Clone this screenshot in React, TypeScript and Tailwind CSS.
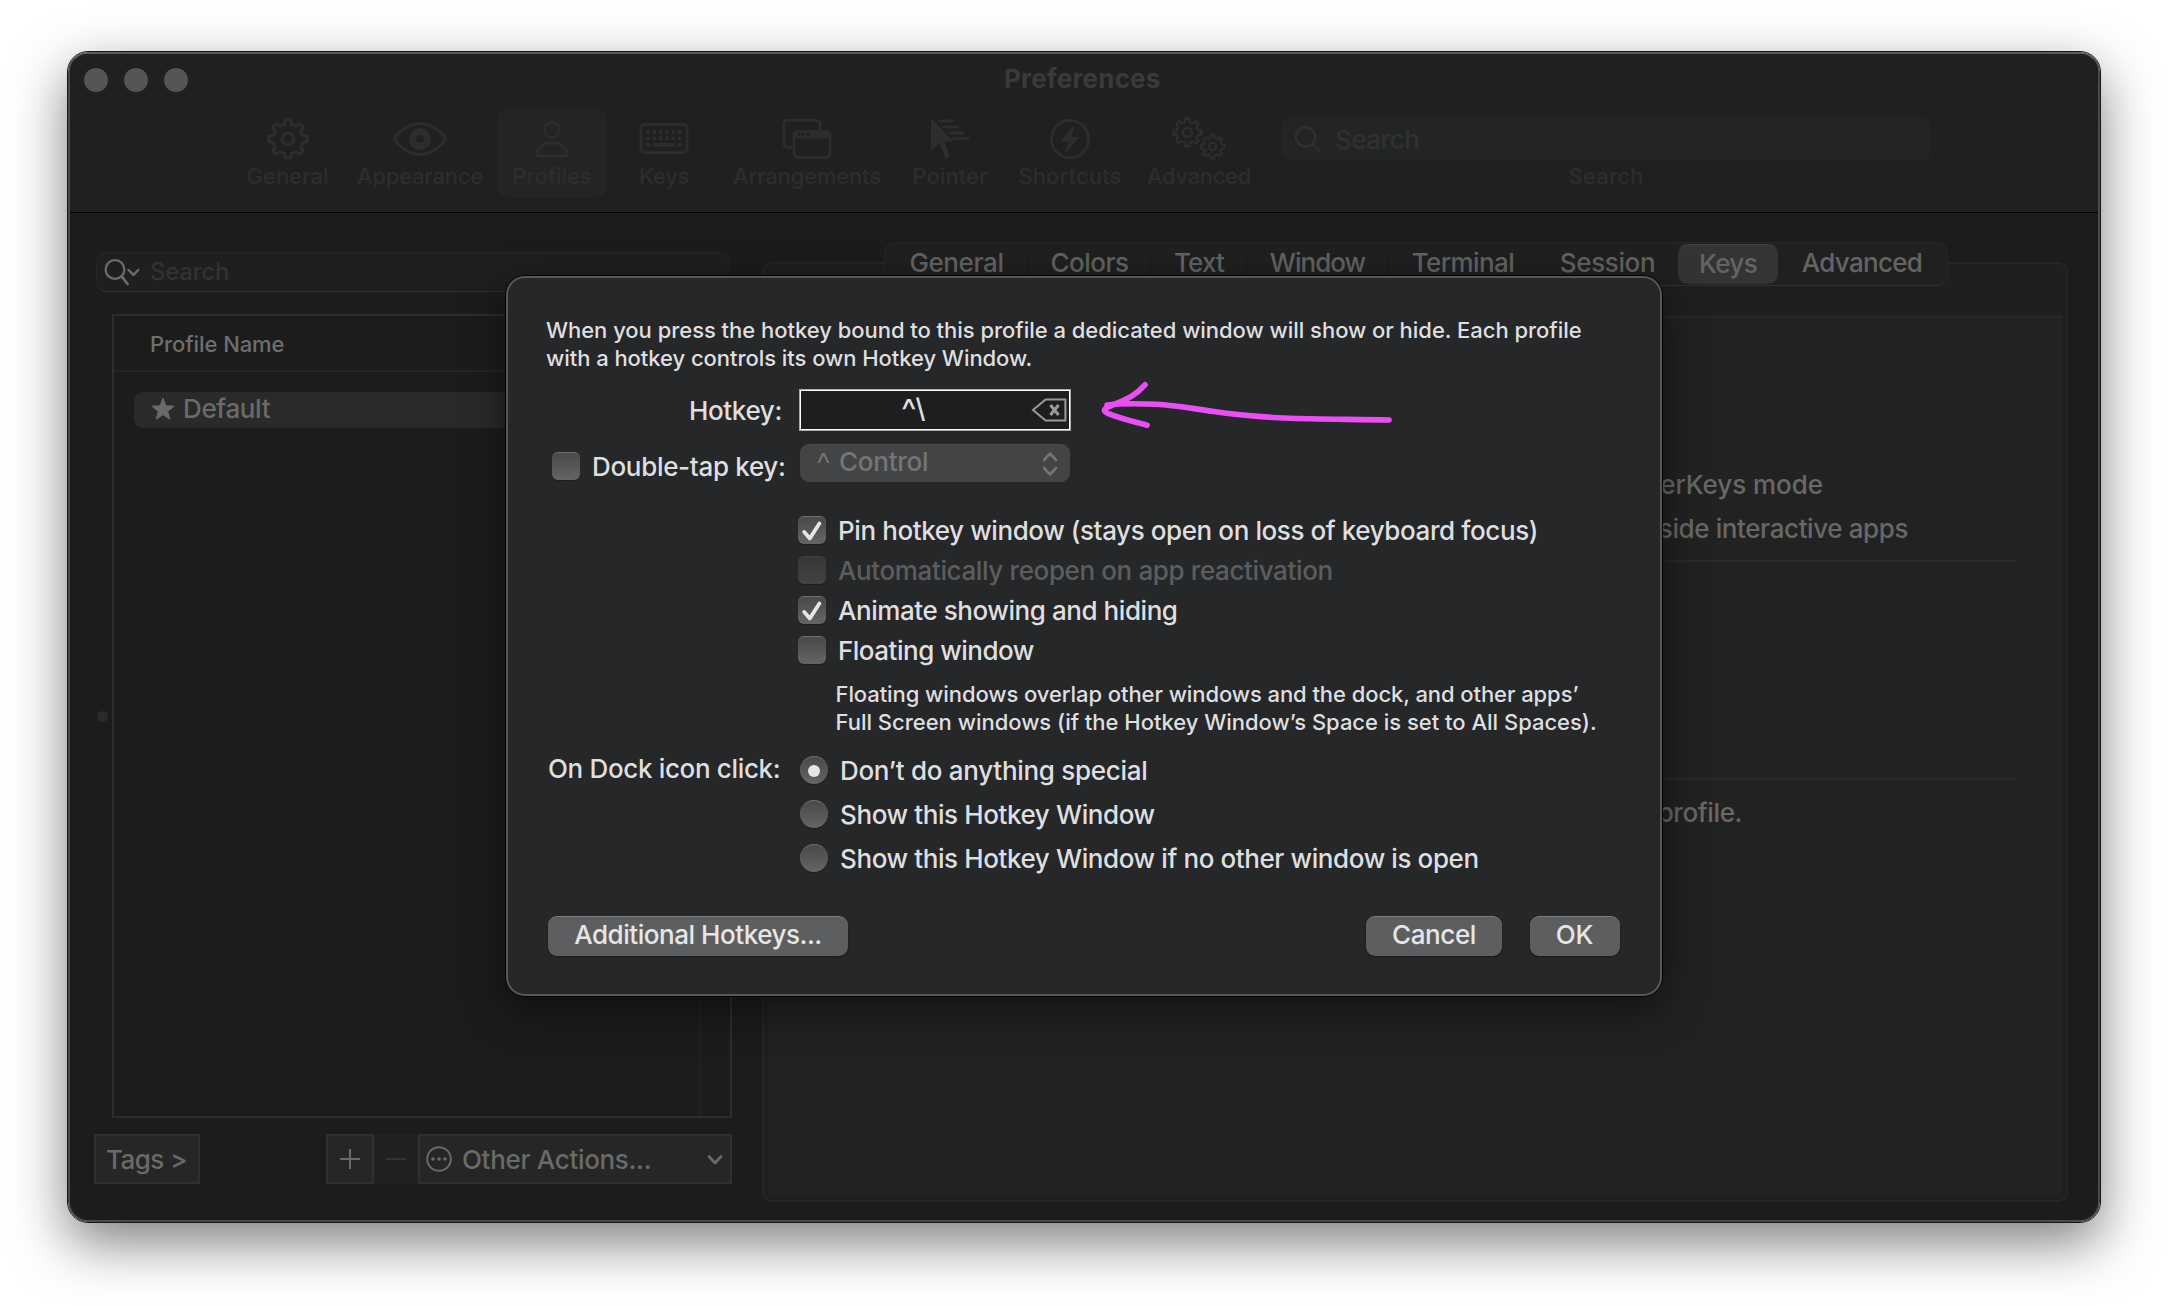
import React from "react";

/** Outline of an eight-toothed gear centred on (cx, cy). */
function gearPath(cx: number, cy: number, outer: number, inner: number) {
  const pts: string[] = [];
  for (let k = 0; k < 8; k++) {
    const steps: [number, number][] = [
      [inner, -13],
      [outer, -8],
      [outer, 8],
      [inner, 13],
    ];
    for (const [r, d] of steps) {
      const a = ((k * 45 - 90 + d) * Math.PI) / 180;
      pts.push(`${(cx + r * Math.cos(a)).toFixed(2)} ${(cy + r * Math.sin(a)).toFixed(2)}`);
    }
  }
  return `M${pts.join("L")}Z`;
}

const GearIcon = () => (
  <svg width="42" height="42" fill="none" stroke="currentColor" strokeWidth="3" strokeLinejoin="round">
    <path d={gearPath(21, 21, 19.3, 15)} />
    <circle cx="21" cy="21" r="5.9" />
  </svg>
);

const EyeIcon = () => (
  <svg width="54" height="42" fill="none" stroke="currentColor" strokeWidth="3" strokeLinejoin="round">
    <path d="M2 21C2 18 13 5.6 27 5.6S52 18 52 21S41 36.4 27 36.4S2 24 2 21Z" />
    <circle cx="27" cy="21" r="7.4" strokeWidth="7" />
  </svg>
);

const PersonIcon = () => (
  <svg width="36" height="42" fill="none" stroke="currentColor" strokeWidth="2.6" strokeLinejoin="round">
    <ellipse cx="18" cy="12" rx="7" ry="7.8" />
    <path d="M4.2 37.7H31.8Q34.4 37.7 33.7 34.6C32 29 26 24.6 18 24.6S4 29 2.3 34.6Q1.6 37.7 4.2 37.7Z" />
  </svg>
);

const KeyboardIcon = () => (
  <svg width="50" height="42" fill="none" stroke="currentColor">
    <rect x="1.9" y="6.4" width="46.2" height="28.2" rx="4" strokeWidth="2.8" />
    <path d="M7.4 14H42.4M7.4 20.3H42.4" strokeWidth="3.6" strokeDasharray="3.4 2.92" />
    <path d="M7.4 26.7H10.8M39 26.7H42.4" strokeWidth="3.6" />
    <path d="M15.4 26.7H34.4" strokeWidth="3.6" strokeLinecap="round" />
  </svg>
);

const WindowsIcon = () => (
  <svg width="50" height="42" fill="none" stroke="currentColor" strokeWidth="2.8">
    <path d="M11 29.4H6Q2 29.4 2 25.4V6.4Q2 2.4 6 2.4H34Q38 2.4 38 6.4V12" />
    <rect x="12" y="13.4" width="36" height="26" rx="4" />
    <path
      fill="currentColor"
      stroke="none"
      fillRule="evenodd"
      d="M12 20V16Q12 12.4 16 12.4H44Q48 12.4 48 16V20.6H12ZM15.4 15h3v3h-3ZM20 15h3v3h-3ZM24.6 15h3v3h-3Z"
    />
  </svg>
);

const PointerIcon = () => (
  <svg width="40" height="42" fill="currentColor">
    <path d="M1 1Q1 0 2 1L22.6 22.4Q23.2 23.6 22 23.6H14.6L19.6 38Q19.8 39 19 39.4L16.6 40.4Q15.4 40.8 15 39.8L9.6 25.4L2 31.6Q1 32.2 1 31Z" />
    <path d="M9 3H22M14 9H28M19.5 15H33M24 20.6H38.5" stroke="currentColor" strokeWidth="2.8" strokeLinecap="round" />
  </svg>
);

const BoltIcon = () => (
  <svg width="42" height="42" fill="none" stroke="currentColor" strokeWidth="2.8">
    <circle cx="21" cy="21" r="18.6" />
    <path fill="currentColor" stroke="none" d="M24.6 8L12.6 22Q12 23.2 13.4 23.2H19.6L16.4 33.4Q16.4 35 17.8 34L29.6 20Q30 18.8 28.8 18.8H22.4L25.6 9Q25.6 7.4 24.6 8Z" />
  </svg>
);

const GearsIcon = () => (
  <svg width="54" height="44" fill="none" stroke="currentColor" strokeWidth="2.6" strokeLinejoin="round">
    <path d={gearPath(15.4, 15.4, 14, 10.8)} />
    <circle cx="15.4" cy="15.4" r="4.6" />
    <g strokeWidth="2.2">
      <path d={gearPath(40.6, 29.6, 11.8, 9.2)} />
      <circle cx="40.6" cy="29.6" r="3.6" />
    </g>
  </svg>
);

const toolbar = [
  { label: "General", icon: <GearIcon />, cell: "w-[111px]", track: "tracking-[-0.02px]" },
  { label: "Appearance", icon: <EyeIcon />, cell: "w-[154px]", track: "tracking-[-0.22px]" },
  { label: "Profiles", icon: <PersonIcon />, cell: "w-[110px] bg-[#232525]", track: "tracking-[-0.06px]" },
  { label: "Keys", icon: <KeyboardIcon />, cell: "w-[114px]", track: "tracking-[-0.3px]" },
  { label: "Arrangements", icon: <WindowsIcon />, cell: "w-[172px]", track: "tracking-[-0.18px]" },
  { label: "Pointer", icon: <PointerIcon />, cell: "w-[114px]", track: "tracking-[0.04px]" },
  { label: "Shortcuts", icon: <BoltIcon />, cell: "w-[126px]", track: "tracking-[0.14px]" },
  { label: "Advanced", icon: <GearsIcon />, cell: "w-[132px]", track: "tracking-[-0.34px]" },
];

const tabs = [
  { label: "General", cell: "w-[143px]", track: "tracking-[-0.4px]" },
  { label: "Colors", cell: "w-[123px]", track: "tracking-[-0.5px]" },
  { label: "Text", cell: "w-[96px]", track: "tracking-[-0.9px]" },
  { label: "Window", cell: "w-[141px]", track: "tracking-[-0.95px]" },
  { label: "Terminal", cell: "w-[149px] pl-px", track: "tracking-[-0.58px]" },
  { label: "Session", cell: "w-[141px]", track: "tracking-[-0.38px]" },
  { label: "Keys", cell: "w-[100px]", track: "tracking-[-0.65px]" },
  { label: "Advanced", cell: "w-[168px]", track: "tracking-[-0.7px]" },
];

function Header() {
  return (
    <header className="h-[159px] border-b border-black bg-[#202020]">
      <div className="flex h-[52px] items-center pl-[14px]">
        <div className="flex gap-4">
          <span className="size-6 rounded-full bg-[#555555]" />
          <span className="size-6 rounded-full bg-[#555555]" />
          <span className="size-6 rounded-full bg-[#555555]" />
        </div>
        <h1 className="ml-[816px] pb-[2px] text-[26px] leading-8 font-bold tracking-[0.18px] text-[#3a3a3a]">Preferences</h1>
      </div>
      <nav className="flex pt-[2px] pl-[162px] text-[#2d2d2d]">
        {toolbar.map((t) => (
          <div key={t.label} className={`flex h-[90px] flex-none flex-col items-center rounded-[12px] pt-[10px] ${t.cell}`}>
            <div className="flex h-[42px] items-center">{t.icon}</div>
            <span className={`mt-[2px] text-[22px] leading-7 ${t.track}`}>{t.label}</span>
          </div>
        ))}
        <div className="ml-4 flex w-[650px] flex-col items-center pt-[9px]">
          <div className="flex h-11 w-full items-center rounded-[10px] bg-[#232525] pl-[13px] text-[#303131]">
            <svg width="28" height="28" fill="none" stroke="currentColor" strokeWidth="2.2" strokeLinecap="round">
              <circle cx="11.5" cy="12" r="9.6" />
              <path d="M18.4 19L25.4 25.6" />
            </svg>
            <span className="ml-[13px] pt-[2px] text-[26px] leading-8 tracking-[-0.5px]">Search</span>
          </div>
          <span className="mt-px text-[22px] leading-7 tracking-[0.18px]">Search</span>
        </div>
      </nav>
    </header>
  );
}

function ProfileList() {
  return (
    <aside className="ml-6 w-[638px] flex-none pt-[39px]">
      <div className="ml-[2px] flex h-10 w-[634px] items-center rounded-[11px] border border-[#262626] border-b-[#303030] bg-[#1f1f1f] pl-[7px]">
        <svg width="36" height="28" fill="none" stroke="#6c6c6c" strokeWidth="2.2" strokeLinecap="round" strokeLinejoin="round">
          <circle cx="11" cy="11.5" r="9.4" />
          <path d="M17.8 18.5L23.6 26" strokeWidth="2.8" />
          <path d="M24.4 11.9L29.4 16.9L34.4 11.9" />
        </svg>
        <span className="ml-[10px] text-[24px] leading-8 tracking-[-0.25px] text-[#323232]">Search</span>
      </div>
      <div className="mt-[22px] ml-[18px] flex h-[804px] w-[620px] border-2 border-[#2e2e2e]">
        <div className="flex-1">
          <div className="flex h-14 items-center border-b-2 border-[#252525] pt-[2px] pl-9 text-[22px] tracking-[-0.08px] text-[#6e6e6e]">
            Profile Name
          </div>
          <div className="mt-5 mr-3 ml-5 flex h-9 items-center rounded-[9px] bg-[#2a2a2a] pl-[17px] text-[#6a6a6a]">
            <svg width="24" height="24" fill="currentColor" stroke="currentColor" strokeWidth="1" strokeLinejoin="round">
              <path d="M12 0.2L14.9 7.8L23 8.2L16.7 13.3L18.8 21.2L12 16.7L5.2 21.2L7.3 13.3L1 8.2L9.1 7.8Z" />
            </svg>
            <span className="ml-2 pb-[2px] text-[26px] leading-8 tracking-[-0.35px]">Default</span>
          </div>
        </div>
        <div className="w-[30px] border-l border-[#252525]" />
      </div>
      <div className="mt-4 flex h-[50px] text-[26px] text-[#6a6a6a]">
        <button className="w-[106px] border-2 border-[#303030] bg-[#262627] pt-px pr-px tracking-[-0.5px]">Tags &gt;</button>
        <button className="ml-[126px] flex w-12 items-center justify-center border-2 border-[#303030] bg-[#262627]">
          <svg width="22" height="22" stroke="currentColor" strokeWidth="2">
            <path d="M1 11H21M11 1V21" />
          </svg>
        </button>
        <button className="flex w-11 items-center justify-center bg-[#202121] text-[#343434]">
          <svg width="22" height="22" stroke="currentColor" strokeWidth="2">
            <path d="M1 11H21" />
          </svg>
        </button>
        <button className="flex flex-1 items-center border-2 border-[#303030] bg-[#262627] pl-[6px]">
          <svg width="26" height="26" fill="none" stroke="currentColor" strokeWidth="2">
            <circle cx="13" cy="13" r="11.8" />
            <g fill="currentColor" stroke="none">
              <circle cx="7" cy="13" r="1.8" />
              <circle cx="13" cy="13" r="1.8" />
              <circle cx="19" cy="13" r="1.8" />
            </g>
          </svg>
          <span className="ml-[10px] pt-px tracking-[-0.32px]">Other Actions...</span>
          <svg className="ml-auto mr-[6px]" width="18" height="14" fill="none" stroke="currentColor" strokeWidth="2.8" strokeLinecap="round" strokeLinejoin="round">
            <path d="M3 4.5L9 11L15 4.5" />
          </svg>
        </button>
      </div>
    </aside>
  );
}

function ProfileDetail() {
  return (
    <section className="ml-[30px] w-[1306px] flex-none pt-[29px]">
      <div className="relative z-10 ml-[122px] flex h-11 w-[1064px] rounded-[12px] border border-[#272727] border-b-[#313131] bg-[#202020] text-[26px] text-[#646464]">
        {tabs.map((t, i) => (
          <div
            key={t.label}
            className={
              t.label === "Keys"
                ? `-my-px mt-px flex h-10 flex-none items-center justify-center rounded-[10px] border-t border-[#404040] bg-[#343434] pb-[3px] ${t.cell} ${t.track}`
                : `relative flex flex-none items-center justify-center pb-[3px] ${t.cell} ${t.track}`
            }
          >
            {t.label}
            {i < 5 && <span className="absolute right-0 h-6 w-[2px] bg-[#1d1d1d]" />}
          </div>
        ))}
      </div>
      <div className="-mt-6 h-[940px] rounded-[10px] border-2 border-[#252525] bg-[#1f1f1f] px-1 pt-[52px] pb-1">
        <div className="h-full border-t-2 border-[#282828] bg-[#222222] pt-[145px] text-[26px] leading-[44px] tracking-[-0.4px] text-[#686868]">
          <p className="w-[1055px] text-right tracking-[-0.05px]">herKeys mode</p>
          <p className="w-[1140px] text-right">side interactive apps</p>
          <hr className="mt-[9px] ml-8 w-[1216px] border-t-2 border-[#2a2a2a]" />
          <hr className="mt-[216px] ml-8 w-[1214px] border-t-2 border-[#2a2a2a]" />
          <p className="mt-[11px] w-[974px] text-right">profile.</p>
        </div>
      </div>
    </section>
  );
}

function Checkbox({ checked, disabled }: { checked?: boolean; disabled?: boolean }) {
  return (
    <span
      className={`flex size-7 flex-none items-center justify-center rounded-[6px] border-t shadow-[0_1px_1px_rgba(0,0,0,0.3)] ${
        disabled
          ? "border-[#3e3f41] bg-linear-to-b from-[#37383a] to-[#414244]"
          : "border-[#707173] bg-linear-to-b from-[#48494b] to-[#646567]"
      }`}
    >
      {checked && (
        <svg width="22" height="22" fill="none" stroke="#e6e6e6" strokeWidth="3.8" strokeLinecap="round" strokeLinejoin="round">
          <path d="M3.2 12L8.8 18.4L18.4 3.4" />
        </svg>
      )}
    </span>
  );
}

function Radio({ checked }: { checked?: boolean }) {
  return (
    <span className="flex size-7 flex-none items-center justify-center rounded-full border-t border-[#707173] bg-linear-to-b from-[#48494b] to-[#646567] shadow-[0_1px_1px_rgba(0,0,0,0.3)]">
      {checked && <span className="size-3 rounded-full bg-[#e6e6e6]" />}
    </span>
  );
}

const pushButton =
  "flex h-10 items-center justify-center rounded-[9px] border-t border-[#7b7c7e] bg-[#5d5e60] pb-[5px] text-[26px] shadow-[0_1px_2px_rgba(0,0,0,0.4)]";

function HotkeyDialog() {
  return (
    <div className="absolute top-[275px] left-[505px] z-20 h-[722px] w-[1158px] rounded-[20px] border border-black bg-[#56575a] p-[2px] text-[#dfdfe0] shadow-[0_12px_44px_rgba(0,0,0,0.5)]">
      <div className="flex h-full flex-col rounded-[17px] bg-[#262729] pt-[38px] pl-px">
        <p className="pl-[37px] text-[22px] leading-7 tracking-[-0.033px] whitespace-nowrap">
          When you press the hotkey bound to this profile a dedicated window will show or hide. Each profile
          <br />
          <span className="tracking-[-0.05px]">with a hotkey controls its own Hotkey Window.</span>
        </p>

        <div className="mt-[17px] flex h-[42px] items-center text-[26px]">
          <span className="w-[290px] pr-[17px] text-right tracking-[-0.35px]">Hotkey:</span>
          <div className="h-[42px] w-[272px] border border-[#a9a9a9]">
            <div className="flex h-full items-center border border-white bg-[#1e1e1e]">
              <span className="ml-[100px] h-8 text-[27px] leading-7">
                <span className="align-[-4px] text-[33px] leading-none font-normal tracking-[-1px]">^</span>\
              </span>
              <svg className="ml-auto mr-[2px]" width="36" height="24" fill="none" stroke="#9a9a9a" strokeWidth="2">
                <path d="M34.4 1.6H14.6L2 12L14.6 22.4H34.4Z" />
                <path d="M19.4 7L27.6 17M27.6 7L19.4 17" strokeWidth="3" />
              </svg>
            </div>
          </div>
        </div>

        <div className="mt-[13px] flex h-[38px] text-[26px]">
          <div className="flex h-7 w-[291px] items-center pt-4 pl-[43px]">
            <Checkbox />
            <span className="ml-3 tracking-[-0.32px]">Double-tap key:</span>
          </div>
          <div className="flex h-[38px] w-[270px] items-center rounded-[9px] border-t border-[#4c4d4f] bg-[#434446] pl-4 text-[#747577]">
            <span className="w-[23px] text-[33px] leading-8 font-light">^</span>
            <span className="pb-[4px] tracking-[-0.25px]">Control</span>
            <svg className="ml-auto mr-3" width="16" height="26" fill="none" stroke="currentColor" strokeWidth="2.8" strokeLinecap="round" strokeLinejoin="round">
              <path d="M2 9L8 2.6L14 9M2 17L8 23.4L14 17" />
            </svg>
          </div>
        </div>

        <div className="mt-7 ml-[289px] text-[26px] tracking-[-0.41px]">
          <label className="flex h-10 items-center gap-3">
            <Checkbox checked />
            Pin hotkey window (stays open on loss of keyboard focus)
          </label>
          <label className="flex h-10 items-center gap-3 tracking-[-0.38px] text-[#5c5d5f]">
            <Checkbox disabled />
            Automatically reopen on app reactivation
          </label>
          <label className="flex h-10 items-center gap-3 tracking-[-0.44px]">
            <Checkbox checked />
            Animate showing and hiding
          </label>
          <label className="flex h-10 items-center gap-3 tracking-[-0.5px]">
            <Checkbox />
            Floating window
          </label>
        </div>

        <p className="mt-[10px] pl-[326.5px] text-[22px] leading-7 tracking-[-0.075px] whitespace-nowrap">
          Floating windows overlap other windows and the dock, and other apps’
          <br />
          <span className="tracking-[-0.015px]">Full Screen windows (if the Hotkey Window’s Space is set to All Spaces).</span>
        </p>

        <div className="mt-3 flex text-[26px]">
          <span className="h-10 w-[291px] pl-[39px] leading-[42px] tracking-[-0.34px]">On Dock icon click:</span>
          <div className="tracking-[-0.4px]">
            <label className="flex h-11 items-center gap-3 tracking-[-0.3px]">
              <Radio checked />
              Don’t do anything special
            </label>
            <label className="flex h-11 items-center gap-3">
              <Radio />
              Show this Hotkey Window
            </label>
            <label className="flex h-11 items-center gap-3">
              <Radio />
              Show this Hotkey Window if no other window is open
            </label>
          </div>
        </div>

        <div className="mt-9 flex pr-[40px] pl-[39px] text-[#e6e6e6]">
          <button className={`w-[300px] tracking-[-0.46px] ${pushButton}`}>Additional Hotkeys...</button>
          <button className={`ml-auto w-[136px] tracking-[-0.4px] ${pushButton}`}>Cancel</button>
          <button className={`ml-7 w-[90px] pr-px tracking-[-0.1px] ${pushButton}`}>OK</button>
        </div>
      </div>

      {/* Hand-drawn arrow pointing at the hotkey field */}
      <svg
        className="absolute top-[100px] left-[584px]"
        width="310"
        height="60"
        fill="none"
        stroke="#e94ff5"
        strokeWidth="5.6"
        strokeLinecap="round"
        strokeLinejoin="round"
      >
        <path d="M299 44C262 43.1 230 43.5 194 42C164 40.6 146 39.2 124 35.6C100 32.2 84 29 66 28.2C48 27.6 30 27.4 17 29" />
        <path d="M55 8.8C42 23 34 23.8 19 30.6C13.2 33.2 12.8 35 18.4 37.6C30 42.4 42 45.2 57 49.2" />
      </svg>
    </div>
  );
}

export default function App() {
  return (
    <div className="relative h-[1306px] w-[2168px] overflow-hidden bg-white pt-[51px] pl-[67px] font-['Inter',sans-serif] font-[450] whitespace-nowrap">
      <div className="h-[1172px] w-[2034px] rounded-[21px] border border-[#161616] shadow-[0_20px_54px_rgba(0,0,0,0.5)]">
        <div className="h-full overflow-hidden rounded-[20px] border-2 border-[#4a4a4a] border-t-[#5a5a5a] bg-[#1c1c1c]">
          <Header />
          <main className="relative flex">
            <ProfileList />
            <ProfileDetail />
            <span className="absolute top-[498px] left-[27px] size-[11px] rounded-full bg-[#2a2a2a]" />
          </main>
        </div>
      </div>
      <HotkeyDialog />
    </div>
  );
}
